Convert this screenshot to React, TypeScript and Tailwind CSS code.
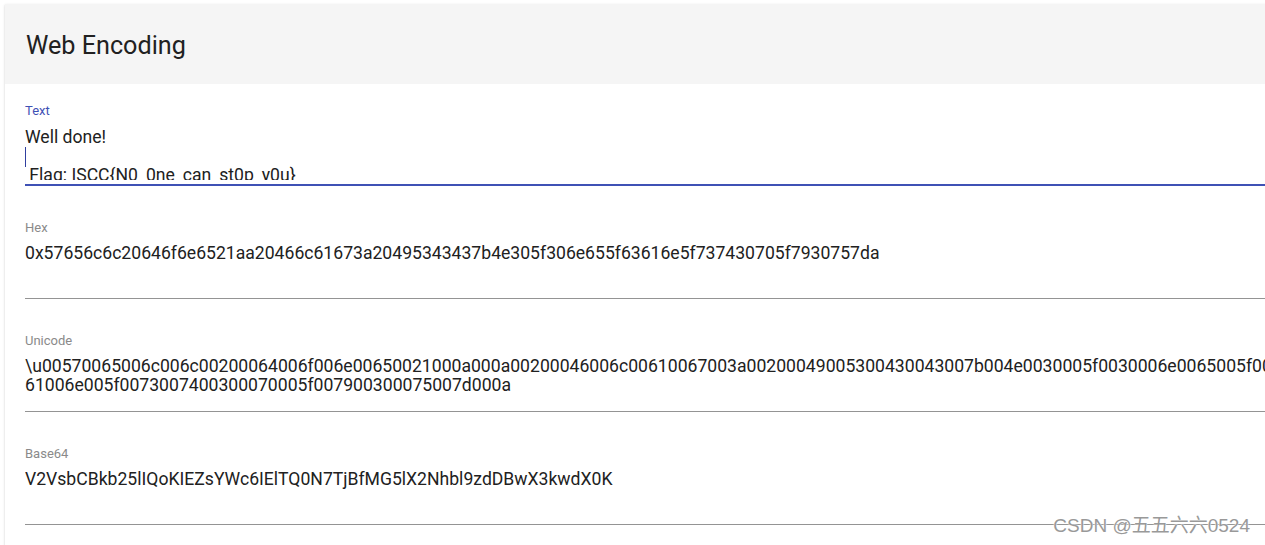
const PLAIN = 'Well done!\n\n Flag: ISCC{N0_0ne_can_st0p_y0u}\n';

// \u prefix only on the first code unit, then raw 4-digit hex for the rest
const UNICODE =
  '\\u' +
  PLAIN.split('')
    .map((ch) => ch.charCodeAt(0).toString(16).padStart(4, '0'))
    .join('');
const UNICODE_LINE_1 = UNICODE.slice(0, 132);
const UNICODE_LINE_2 = UNICODE.slice(132);

const HEX =
  '0x57656c6c20646f6e6521aa20466c61673a20495343437b4e305f306e655f63616e5f737430705f7930757da';
const BASE64 = 'V2VsbCBkb25lIQoKIEZsYWc6IElTQ0N7TjBfMG5lX2Nhbl9zdDBwX3kwdX0K';

function Field({ label, children }: { label: string; children: React.ReactNode }) {
  return (
    <div className="pt-[35px]">
      <div className="h-[14px] text-[13px] leading-[14px] text-[#8a8a8a]">{label}</div>
      <div className="mt-[9px] h-[55px] overflow-hidden border-b border-[#949494] text-[17.6px] leading-[19px] text-[#212121]">
        {children}
      </div>
    </div>
  );
}

export default function App() {
  return (
    <div className="relative w-[1265px] h-[545px] overflow-hidden bg-white font-['Roboto',sans-serif]">
      <div className="ml-[5px] mt-[4px] w-[1300px] h-[600px] bg-white shadow-[0_2px_1px_-1px_rgba(0,0,0,0.2),0_1px_1px_0_rgba(0,0,0,0.14),0_1px_3px_0_rgba(0,0,0,0.12)]">
        <div className="h-[80px] bg-[#f5f5f5] pl-[21px] pt-[3px] flex items-center">
          <h1 className="text-[25.2px] leading-none text-[#212121] font-normal">Web Encoding</h1>
        </div>

        <div className="pl-[20px]">
          {/* Text (focused) */}
          <div className="pt-[20px]">
            <div className="h-[14px] text-[13px] leading-[14px] text-[#3f51b5]">Text</div>
            <div className="mt-[10px] pb-[4px] border-b-2 border-[#3f51b5]">
              <div className="h-[52px] overflow-hidden text-[17.6px] leading-[19px] text-[#212121] whitespace-pre">
                <div>Well done!</div>
                <div className="h-[19px] flex items-center">
                  <span className="block w-px h-[20px] bg-[#303f9f]" />
                </div>
                <div> Flag: ISCC{'{'}N0_0ne_can_st0p_y0u{'}'}</div>
              </div>
            </div>
          </div>

          <Field label="Hex">
            <div className="whitespace-nowrap">{HEX}</div>
          </Field>

          <Field label="Unicode">
            <div className="whitespace-nowrap">{UNICODE_LINE_1}</div>
            <div className="whitespace-nowrap">{UNICODE_LINE_2}</div>
          </Field>

          <Field label="Base64">
            <div className="whitespace-nowrap">{BASE64}</div>
          </Field>
        </div>
      </div>

      <div className="absolute right-[15px] top-[513px] text-[19px] leading-[26px] text-[#999999] font-['Liberation_Sans','Noto_Sans_CJK_SC',sans-serif] [text-shadow:0_0_1px_#fff,0_0_2px_#fff]">
        CSDN @五五六六0524
      </div>
    </div>
  );
}
